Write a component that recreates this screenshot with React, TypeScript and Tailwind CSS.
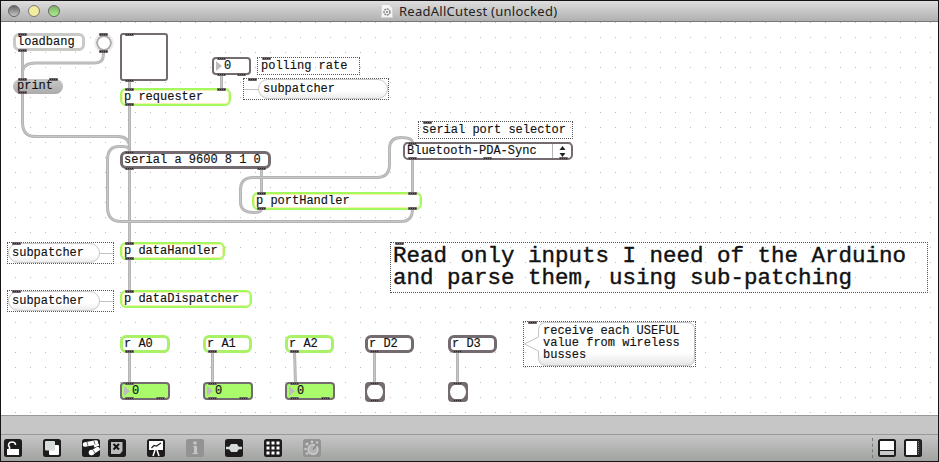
import React from "react";

type Kind = "green" | "dark" | "light" | "receive";

const mono =
  "font-['Courier_New','Liberation_Mono',monospace] text-[12px] leading-[14px] text-[#111] whitespace-pre [-webkit-text-stroke:0.15px_#111]";

const frames: Record<Kind, string> = {
  green: "border-2 border-[#a4f95f] rounded-[6px] shadow-[inset_0_0_0_1px_#f6f0b0]",
  dark: "border-[3px] border-[#736b6f] rounded-[6px]",
  light: "border-[3px] border-[#c9c9c6] rounded-[6px]",
  receive: "border-[3px] border-[#a9f268] rounded-[6px]",
};

function Box({ at, kind, children }: { at: string; kind: Kind; children: string }) {
  return (
    <div className={`absolute h-[18px] bg-white ${frames[kind]} ${at}`}>
      <span className={`absolute left-1 ${kind === "green" ? "-ml-[2px] top-0" : "-ml-[3px] -top-px"} ${mono}`}>{children}</span>
    </div>
  );
}

function NumberBox({ at, fill }: { at: string; fill: string }) {
  return (
    <div className={`absolute flex h-[18px] items-center rounded-[4px] border-2 border-[#736b6f] ${fill} ${at}`}>
      <svg width="7" height="12" viewBox="0 0 7 12" className="ml-[2px]">
        <path d="M0 1 L6 6 L0 11Z" fill="#bdbdbd" />
      </svg>
      <span className={`ml-px ${mono}`}>0</span>
    </div>
  );
}

function BangBox({ at }: { at: string }) {
  return (
    <div className={`absolute flex size-5 items-center justify-center rounded-[4px] bg-[#736b6f] ${at}`}>
      <div className="size-4 rounded-full bg-white" />
    </div>
  );
}

function SideNote({ at }: { at: string }) {
  return (
    <div className={`absolute flex h-[22px] w-[107px] items-center border border-dotted border-[#555] bg-white ${at}`}>
      <div className="flex h-5 w-[92px] items-center rounded-full border border-[#c8c8c8] bg-gradient-to-b from-white from-60% to-[#ececec] pl-[3px]">
        <span className={mono}>subpatcher</span>
      </div>
      <div className="h-px flex-1 bg-[#c4c4c4]" />
    </div>
  );
}

const ports: [number, number][] = [
  [18, 33], [18, 49], [99, 33], [99, 50], [125, 33], [125, 79],
  [18, 78], [49, 78], [18, 91], [217, 57], [217, 73], [237, 73],
  [125, 88], [217, 88], [125, 103], [262, 57], [248, 78],
  [125, 151], [125, 167], [257, 167], [257, 192], [408, 192], [257, 207], [408, 207],
  [423, 121], [408, 142], [408, 157], [483, 157], [559, 157],
  [125, 242], [125, 257], [125, 290], [12, 242], [12, 290], [395, 242],
  [125, 350], [208, 350], [290, 350], [370, 350], [453, 350],
  [125, 382], [125, 397], [156, 397], [208, 382], [208, 397], [239, 397],
  [290, 382], [290, 397], [321, 397], [370, 382], [370, 399], [453, 382], [453, 399],
  [528, 321],
];

const cords = [
  "M22.5 50V80",
  "M103.5 51V54Q103.5 63 95 63H36Q22.5 63 22.5 73",
  "M22.5 93V122Q22.5 136.5 35 136.5H118Q129.5 136.5 129.5 148",
  "M129.5 79V89", "M129.5 104V152", "M221.5 74V89",
  "M129.5 168V243", "M129.5 258V291", "M261.5 168V193",
  "M261.5 209Q261.5 212.5 254 212.5Q240.5 212.5 240.5 202V190Q240.5 177.5 253 177.5H377Q389.5 177.5 389.5 164V149Q389.5 137.5 401 137.5Q412.5 137.5 412.5 143",
  "M412.5 158V193",
  "M412.5 209Q412.5 221.5 401 221.5H121Q107.5 221.5 107.5 207V160Q107.5 146.5 119 146.5H123Q129.5 146.5 129.5 151",
  "M129.5 352V383", "M212.5 352V383", "M294.5 352L295.5 383", "M374.5 352V383", "M457.5 352V383",
];

function Patcher() {
  return (
    <div className="relative h-[393px] shrink-0 overflow-hidden bg-white">
      <div className="absolute -left-px -top-[22px] h-[462px] w-[939px]">
        <svg className="absolute inset-0" width="939" height="462">
          <defs>
            <pattern id="grid" width="15" height="15" x="0" y="7" patternUnits="userSpaceOnUse">
              <rect width="1" height="1" fill="#bcbcbc" />
            </pattern>
          </defs>
          <rect width="939" height="462" fill="url(#grid)" />
          {cords.map((d) => (
            <g key={d} fill="none">
              <path d={d} stroke="#b4b4b4" strokeWidth="3" />
              <path d={d} stroke="#c8c8c8" strokeWidth="1" />
            </g>
          ))}
        </svg>

        <Box at="left-[13px] top-[33px] w-[72px]" kind="light">loadbang</Box>
        <div className="absolute left-[96px] top-[35px] size-4 rounded-full border-2 border-[#adadad] bg-white outline-2 outline-[#ededed]" />
        <div className="absolute left-[120px] top-[33px] size-12 rounded-[3px] border-2 border-[#736b6f] bg-white" />
        <div className={`absolute left-[13px] top-[79px] h-[15px] w-[50px] rounded-full bg-gradient-to-b from-[#c9c9c9] to-[#ababab] pl-1 ${mono}`}>print</div>
        <NumberBox at="left-[212px] top-[57px] w-[39px]" fill="bg-white" />
        <div className={`absolute left-[257px] top-[57px] h-[18px] w-[103px] border border-dotted border-[#555] pl-[3px] pt-px ${mono}`}>polling rate</div>
        <div className="absolute left-[243px] top-[78px] flex h-[22px] w-[146px] items-center border border-dotted border-[#555] bg-white">
          <div className="h-px w-[14px] bg-[#c4c4c4]" />
          <div className="flex h-5 flex-1 items-center rounded-full border border-[#c8c8c8] bg-gradient-to-b from-white from-60% to-[#ececec] pl-1">
            <span className={mono}>subpatcher</span>
          </div>
        </div>
        <Box at="left-[120px] top-[88px] w-[111px]" kind="green">p requester</Box>
        <Box at="left-[120px] top-[151px] w-[151px]" kind="dark">serial a 9600 8 1 0</Box>
        <Box at="left-[252px] top-[192px] w-[170px]" kind="green">p portHandler</Box>
        <div className={`absolute left-[418px] top-[121px] h-[18px] w-[155px] border border-dotted border-[#555] pl-[3px] pt-px ${mono}`}>serial port selector</div>
        <div className="absolute left-[403px] top-[142px] flex h-[18px] w-[170px] items-center justify-between rounded-[5px] border-2 border-[#736b6f] bg-white">
          <span className={`-mt-px pl-[2px] ${mono}`}>Bluetooth-PDA-Sync</span>
          <div className="flex h-full w-[19px] items-center justify-center border-l border-[#b5b5b5]">
            <svg width="7" height="11" viewBox="0 0 7 11"><path d="M3.5 0L6.5 4H.5ZM3.5 11L6.5 7H.5Z" fill="#222" /></svg>
          </div>
        </div>
        <SideNote at="left-[7px] top-[242px]" />
        <SideNote at="left-[7px] top-[290px]" />
        <Box at="left-[120px] top-[242px] w-[105px]" kind="green">p dataHandler</Box>
        <Box at="left-[120px] top-[290px] w-[132px]" kind="green">p dataDispatcher</Box>

        <div className="absolute left-[390px] top-[242px] h-[51px] w-[538px] whitespace-pre border border-dotted border-[#555] pl-[2px] pt-[2px] font-['Courier_New','Liberation_Mono',monospace] text-[22.5px] leading-[22px] text-[#111] [-webkit-text-stroke:0.4px_#111]">
          {"Read only inputs I need of the Arduino\nand parse them, using sub-patching"}
        </div>

        <Box at="left-[120px] top-[335px] w-[50px]" kind="receive">r A0</Box>
        <Box at="left-[203px] top-[335px] w-[49px]" kind="receive">r A1</Box>
        <Box at="left-[285px] top-[335px] w-[49px]" kind="receive">r A2</Box>
        <Box at="left-[365px] top-[335px] w-[49px]" kind="dark">r D2</Box>
        <Box at="left-[448px] top-[335px] w-[49px]" kind="dark">r D3</Box>
        <NumberBox at="left-[120px] top-[382px] w-[50px]" fill="bg-[#a9fb6c]" />
        <NumberBox at="left-[203px] top-[382px] w-[50px]" fill="bg-[#a9fb6c]" />
        <NumberBox at="left-[285px] top-[382px] w-[50px]" fill="bg-[#a9fb6c]" />
        <BangBox at="left-[365px] top-[382px]" />
        <BangBox at="left-[448px] top-[382px]" />

        <div className="absolute left-[523px] top-[321px] h-[46px] w-[173px] border border-dotted border-[#555]">
          <svg className="absolute left-0 top-0" width="171" height="44">
            <defs>
              <linearGradient id="note" x2="0" y2="1">
                <stop offset=".7" stopColor="#fff" />
                <stop offset="1" stopColor="#e6e6e6" />
              </linearGradient>
            </defs>
            <path d="M22.5 .5H163Q170.5 .5 170.5 8.5V35Q170.5 43.5 163 43.5H22.5Q14.5 43.5 14.5 35V29L.5 22L14.5 15V8.5Q14.5 .5 22.5 .5Z" fill="url(#note)" stroke="#c4c4c4" />
          </svg>
          <p className="relative whitespace-pre pl-[19px] pt-[3px] font-['Courier_New','Liberation_Mono',monospace] text-[12px] leading-[12px] text-[#111] [-webkit-text-stroke:0.15px_#111]">
            {"receive each USEFUL\nvalue from wireless\nbusses"}
          </p>
        </div>

        <svg className="absolute inset-0" width="939" height="462">
          {ports.map(([x, y]) => (
            <g key={`${x}-${y}`}>
              <rect x={x} y={y} width="9" height="3" rx="1" fill="#6a6266" />
              <path d={`M${x + 1} ${y + 1.5}h7`} stroke="#2b2729" strokeDasharray="1 1" />
            </g>
          ))}
        </svg>
      </div>
    </div>
  );
}

const tile = "size-[18px] shrink-0";

function Tile({ faded = false, children }: { faded?: boolean; children: React.ReactNode }) {
  return (
    <svg className={tile} viewBox="0 0 18 18">
      <rect width="18" height="18" rx="2.5" fill={faded ? "#939393" : "#1d1b1c"} />
      {children}
    </svg>
  );
}

function Toolbar() {
  return (
    <div className="flex h-[27px] shrink-0 items-center border-t border-[#999] bg-gradient-to-b from-[#c6c6c6] to-[#a0a3a0] pl-[3px] pr-4">
      <div className="flex gap-[21px]">
        <Tile>
          <path d="M5.5 11V8L4.5 6.5C4.5 3.5 6.500 3 8 3C10 3 11.500 4 11.500 6" fill="none" stroke="#fff" strokeWidth="1.6" />
          <rect x="3" y="10" width="12" height="6" fill="#fff" />
        </Tile>
        <Tile>
          <rect x="6" y="6" width="10" height="10" rx="1" fill="#fff" />
          <rect x="2" y="2" width="10" height="9.500" rx="1" fill="#d7dcd8" />
        </Tile>
        <div className="flex gap-2">
          <Tile>
            <path d="M3 5.500L14 3.500" stroke="#fff" strokeWidth="4.500" strokeLinecap="round" />
            <path d="M9.500 14L15.500 10" stroke="#fff" strokeWidth="4.500" strokeLinecap="round" />
            <circle cx="9.500" cy="13.500" r="2.800" fill="#fff" />
            <path d="M12 7.500L17 5.500" stroke="#fff" strokeWidth="2" />
            <path d="M5 3L6 7M12 2L13 5.500M11 11L13 14" stroke="#444" strokeWidth=".8" />
          </Tile>
          <Tile>
            <path d="M3 3H14.500V12L12 15H3Z" fill="#b9bcb9" />
            <path d="M5.500 5L11 10.500M11 5L5.500 10.500" stroke="#111" strokeWidth="2" />
          </Tile>
        </div>
        <Tile>
          <path d="M2 2H16V11H2Z" fill="#fff" />
          <path d="M4.500 9L7 6.500L9.500 7L14 4" fill="none" stroke="#222" strokeWidth="1.200" />
          <path d="M8 11L6 17M10 11L12 17" stroke="#fff" strokeWidth="1.500" />
        </Tile>
        <Tile faded>
          <circle cx="9" cy="4" r="1.800" fill="#c6c6c6" />
          <path d="M7 7H11V14H12V15H6.500V14H8V8H7Z" fill="#c6c6c6" />
        </Tile>
        <Tile>
          <path d="M1 9H17" stroke="#d7dcd8" strokeWidth="2.500" />
          <path d="M6 5H12L14.500 9L12 13H6L3.500 9Z" fill="#d7dcd8" />
        </Tile>
        <Tile>
          {[3, 8, 13].map((x) =>
            [3, 8, 13].map((y) => <rect key={`${x}-${y}`} x={x - 0.5} y={y - 0.5} width="3" height="3" fill="#fff" />)
          )}
        </Tile>
        <Tile faded>
          <circle cx="10" cy="10.500" r="4.800" fill="#b4b4b4" stroke="#cdcdcd" strokeWidth="1.500" />
          <path d="M10 10.500L13.500 6" stroke="#858585" strokeWidth="1.500" />
          <circle cx="4" cy="5" r="1.600" fill="#c9c9c9" />
          <circle cx="9" cy="3" r="1.400" fill="#c9c9c9" />
          <circle cx="2.500" cy="10" r="1.300" fill="#c9c9c9" />
          <circle cx="4" cy="14.500" r="1.300" fill="#c9c9c9" />
          <circle cx="14" cy="3.500" r="1.200" fill="#c9c9c9" />
        </Tile>
      </div>
      <div className="ml-auto flex items-center">
        <div className="mr-[5px] h-5 border-l border-dashed border-[#777]" />
        <svg className={`mr-2 ${tile}`} viewBox="0 0 18 18">
          <rect x="1" y="1" width="16" height="16" rx="1.500" fill="#fff" stroke="#1d1b1c" strokeWidth="2" />
          <rect x="2" y="12" width="14" height="4" fill="#c9c9c9" />
          <path d="M2 11.500H16" stroke="#1d1b1c" />
        </svg>
        <svg className={tile} viewBox="0 0 18 18">
          <rect x="1" y="1" width="16" height="16" rx="1.500" fill="#fff" stroke="#1d1b1c" strokeWidth="2" />
          <rect x="13" y="2" width="4" height="14" fill="#2c292a" />
          <path d="M14.500 2V16" stroke="#777" strokeDasharray="1 1" />
        </svg>
      </div>
    </div>
  );
}

export default function App() {
  return (
    <div className="flex h-[462px] w-[939px] flex-col overflow-hidden border border-[#171315] bg-white">
      <header className="flex h-[21px] shrink-0 items-center border-b border-[#777] bg-gradient-to-b from-[#dedede] to-[#b0b0b0] pl-[7px]">
        <div className="flex gap-2">
          <div className="size-3 rounded-full border-[1.5px] border-[#666] bg-gradient-to-b from-[#666] to-[#c8c8c8]" />
          <div className="size-3 rounded-full border-[1.5px] border-[#777] bg-[#f3eda0]" />
          <div className="size-3 rounded-full border-[1.5px] border-[#666] bg-gradient-to-b from-[#7fae6c] to-[#a9f088]" />
        </div>
        <svg className="ml-[321px]" width="12" height="14" viewBox="0 0 12 14">
          <path d="M.5 .5H8L11.500 4V13.500H.5Z" fill="#f6f6f6" stroke="#d4d4d4" />
          <circle cx="6" cy="8" r="3" fill="none" stroke="#888" strokeWidth="1.500" strokeDasharray="2 .7" />
          <circle cx="6" cy="8" r="1" fill="#777" />
        </svg>
        <h1 className="ml-[6px] whitespace-pre font-['Lucida_Grande','Noto_Sans',sans-serif] text-[13px] leading-5 tracking-[0.27px] text-[#222]">ReadAllCutest (unlocked)</h1>
      </header>
      <Patcher />
      <div className="h-[19px] shrink-0 border-t border-[#999] bg-[#c6c6c6]" />
      <Toolbar />
    </div>
  );
}
